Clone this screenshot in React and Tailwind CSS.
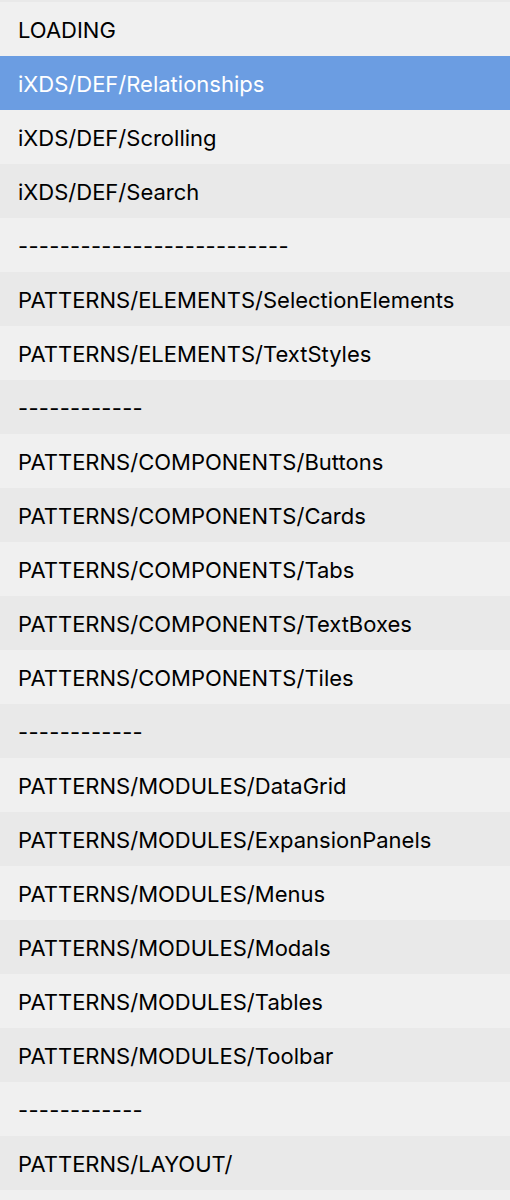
import React from "react";

const items = [
  "LOADING",
  "iXDS/DEF/Relationships",
  "iXDS/DEF/Scrolling",
  "iXDS/DEF/Search",
  "--------------------------",
  "PATTERNS/ELEMENTS/SelectionElements",
  "PATTERNS/ELEMENTS/TextStyles",
  "------------",
  "PATTERNS/COMPONENTS/Buttons",
  "PATTERNS/COMPONENTS/Cards",
  "PATTERNS/COMPONENTS/Tabs",
  "PATTERNS/COMPONENTS/TextBoxes",
  "PATTERNS/COMPONENTS/Tiles",
  "------------",
  "PATTERNS/MODULES/DataGrid",
  "PATTERNS/MODULES/ExpansionPanels",
  "PATTERNS/MODULES/Menus",
  "PATTERNS/MODULES/Modals",
  "PATTERNS/MODULES/Tables",
  "PATTERNS/MODULES/Toolbar",
  "------------",
  "PATTERNS/LAYOUT/",
  "",
];

export default function App() {
  return (
    <div
      className="w-[510px] h-[1200px] overflow-hidden bg-[#f0f0f0]"
      style={{ fontFamily: "Inter, 'Noto Sans', sans-serif" }}
    >
      <div className="h-[2px] bg-[#e9e9e9]" />
      {items.map((t, i) => {
        const selected = i === 1;
        const bg = selected
          ? "bg-[#6b9de2] text-white"
          : i % 2 === 0
          ? "bg-[#f0f0f0] text-black"
          : "bg-[#e9e9e9] text-black";
        const dash = t.startsWith("-");
        return (
          <div
            key={i}
            className={`h-[54px] flex items-center pl-[18px] pt-[1px] text-[22px] leading-none whitespace-pre ${bg} ${dash ? "tracking-[0.3px]" : ""}`}
          >
            {t}
          </div>
        );
      })}
    </div>
  );
}
